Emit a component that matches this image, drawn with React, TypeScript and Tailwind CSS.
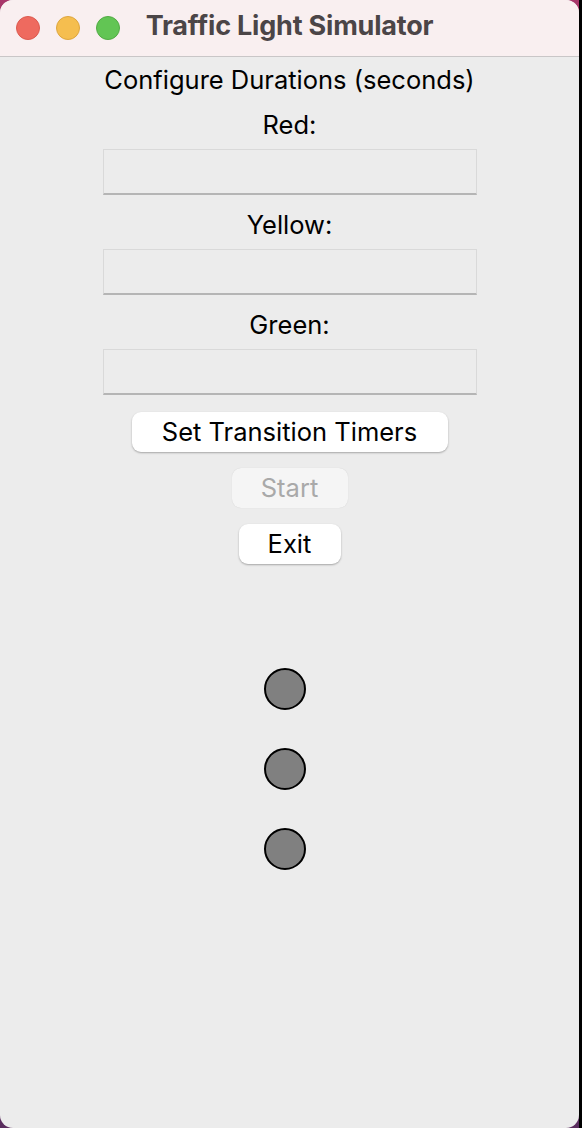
import React from "react";

function Field({ label, top }: { label: string; top: string }) {
  return (
    <div className={`flex flex-col items-center ${top}`}>
      <div className="h-[26px] leading-[26px] text-[25.5px] text-black">{label}</div>
      <div className="mt-[11px] h-[46px] w-[374px] border border-[#d9d9d9] border-b-[#b5b5b5] border-b-2 bg-[#ececec]" />
    </div>
  );
}

function Light() {
  return <div className="h-[42px] w-[42px] rounded-full border-2 border-black bg-[#808080]" />;
}

export default function App() {
  return (
    <div className="flex h-[1128px] w-[582px] bg-gradient-to-b from-[#a8376a] via-[#6e2f62] to-[#5a2d5e] font-['Inter',sans-serif]">
      <div className="flex h-full w-[579px] flex-col overflow-hidden rounded-[13px] bg-[#ececec]">
        <div className="relative flex h-[57px] shrink-0 items-center justify-center border-b border-[#c9c6c7] bg-[#f9eff0]">
          <div className="absolute left-[16px] top-[16px] flex gap-[16px]">
            <div className="h-[24px] w-[24px] rounded-full border border-[#dc5a4f] bg-[#ee6a5f]" />
            <div className="h-[24px] w-[24px] rounded-full border border-[#dea63e] bg-[#f5be4f]" />
            <div className="h-[24px] w-[24px] rounded-full border border-[#52ab44] bg-[#62c554]" />
          </div>
          <div className="mb-[3px] text-[27px] font-bold tracking-[-0.2px] text-[#4b4547]">Traffic Light Simulator</div>
        </div>
        <div className="flex flex-col items-center pt-[10px]">
          <div className="h-[26px] leading-[26px] text-[25.5px] text-black">Configure Durations (seconds)</div>
          <Field label="Red:" top="mt-[19px]" />
          <Field label="Yellow:" top="mt-[17px]" />
          <Field label="Green:" top="mt-[17px]" />
          <button className="mt-[17px] h-[40px] w-[316px] rounded-[9px] bg-white text-[25.5px] leading-[40px] text-black shadow-[0_1px_2px_rgba(0,0,0,0.3)]">
            Set Transition Timers
          </button>
          <button className="mt-[16px] h-[40px] w-[116px] rounded-[9px] bg-[#f5f5f5] text-[25.5px] leading-[40px] text-[#a9a9a9] shadow-[0_0_1px_rgba(0,0,0,0.15)]">
            Start
          </button>
          <button className="mt-[16px] h-[40px] w-[102px] rounded-[9px] bg-white text-[25.5px] leading-[40px] text-black shadow-[0_1px_2px_rgba(0,0,0,0.3)]">
            Exit
          </button>
          <div className="mr-[9px] mt-[104px] flex flex-col items-center gap-[38px]">
            <Light />
            <Light />
            <Light />
          </div>
        </div>
      </div>
      <div className="h-full w-[3px] bg-black" />
    </div>
  );
}
